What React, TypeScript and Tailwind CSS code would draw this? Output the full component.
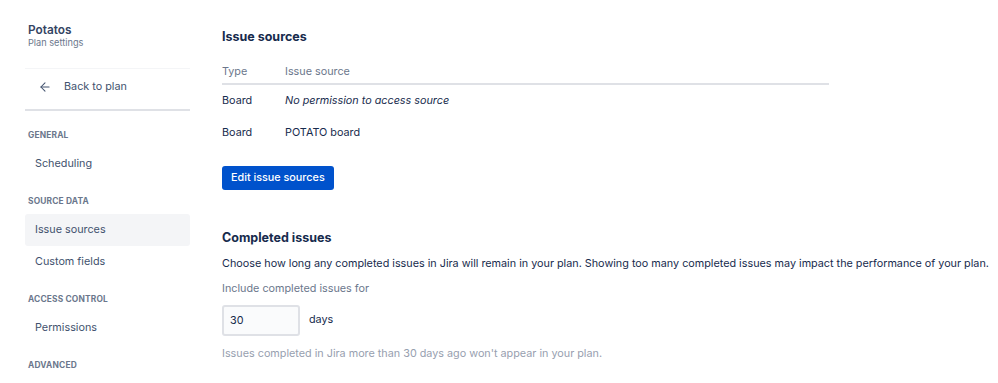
import { ArrowLeft } from "lucide-react";

const groups = [
  { label: "General", items: ["Scheduling"] },
  { label: "Source data", items: ["Issue sources", "Custom fields"] },
  { label: "Access control", items: ["Permissions"] },
  { label: "Advanced", items: [] as string[] },
];

const sources = [
  { type: "Board", name: "No permission to access source", restricted: true },
  { type: "Board", name: "POTATO board", restricted: false },
];

function Sidebar() {
  return (
    <aside className="w-[165px] shrink-0 ml-[25px]">
      <div className="pt-[22px] pl-[3px]">
        <p className="text-[11.8px] leading-[16px] font-semibold text-[#344563]">Potatos</p>
        <p className="-mt-[1px] text-[9.2px] leading-[12px] text-[#6b778c]">Plan settings</p>
      </div>

      <div className="mt-[19px] border-t border-[#f4f5f7]">
        <a className="flex h-[40px] items-center pb-[4px] pl-[13px] text-[10.8px] text-[#42526e]">
          <ArrowLeft className="size-[14px]" strokeWidth={1.8} />
          <span className="ml-[12px]">Back to plan</span>
        </a>
      </div>
      <div className="h-[2px] bg-[#dfe1e6]" />

      <nav className="pt-[3px]">
        {groups.map((g) => (
          <div key={g.label}>
            <p className="mt-[14px] mb-[6px] h-[14px] pl-[3px] text-[8.4px] leading-[14px] font-bold uppercase tracking-[0.02em] text-[#6b778c]">
              {g.label}
            </p>
            {g.items.map((item) => (
              <div
                key={item}
                className={
                  "flex h-[32px] items-center rounded-[3px] pl-[10px] text-[10.8px] text-[#42526e] " +
                  (item === "Issue sources" ? "bg-[#f4f5f7]" : "")
                }
              >
                {item}
              </div>
            ))}
          </div>
        ))}
      </nav>
    </aside>
  );
}

export default function App() {
  return (
    <div className="flex h-[383px] w-[998px] overflow-hidden bg-white font-['Inter','Liberation_Sans',sans-serif] text-[#172b4d] antialiased">
      <Sidebar />

      <main className="ml-[32px] flex-1 pt-[27px]">
        <h2 className="text-[12.5px] leading-[20px] font-bold text-[#172b4d]">Issue sources</h2>

        <table className="mt-[15px] w-[607px] border-collapse text-left text-[10.8px]">
          <thead>
            <tr className="h-[22px] border-b-2 border-[#dfe1e6] align-top text-[#6b778c]">
              <th className="w-[63px] p-0 leading-[19px] font-normal">Type</th>
              <th className="p-0 leading-[19px] font-normal">Issue source</th>
            </tr>
          </thead>
          <tbody>
            {sources.map((s, i) => (
              <tr key={i} className="h-[33px]">
                <td className="p-0">{s.type}</td>
                <td className={"p-0 " + (s.restricted ? "italic" : "")}>{s.name}</td>
              </tr>
            ))}
          </tbody>
        </table>

        <button className="mt-[16px] flex h-[24px] items-center rounded-[3px] bg-[#0052cc] px-[9px] text-[10.8px] font-medium text-white">
          Edit issue sources
        </button>

        <h2 className="mt-[38px] text-[12.5px] leading-[20px] font-bold text-[#172b4d]">Completed issues</h2>
        <p className="mt-[8px] whitespace-nowrap text-[10.8px] leading-[16px]">
          Choose how long any completed issues in Jira will remain in your plan. Showing too many completed issues may
          impact the performance of your plan.
        </p>

        <label className="mt-[9px] block text-[10.8px] leading-[16px] text-[#6b778c]">Include completed issues for</label>
        <div className="mt-[8px] flex items-center">
          <input
            defaultValue="30"
            className="h-[31px] w-[78px] rounded-[3px] border-2 border-[#dfe1e6] bg-[#fafbfc] px-[6px] text-[10.8px] text-[#172b4d] outline-none"
          />
          <span className="ml-[9px] text-[10.8px]">days</span>
        </div>

        <p className="mt-[10px] text-[10.8px] leading-[16px] text-[#97a0af]">
          Issues completed in Jira more than 30 days ago won't appear in your plan.
        </p>
      </main>
    </div>
  );
}
